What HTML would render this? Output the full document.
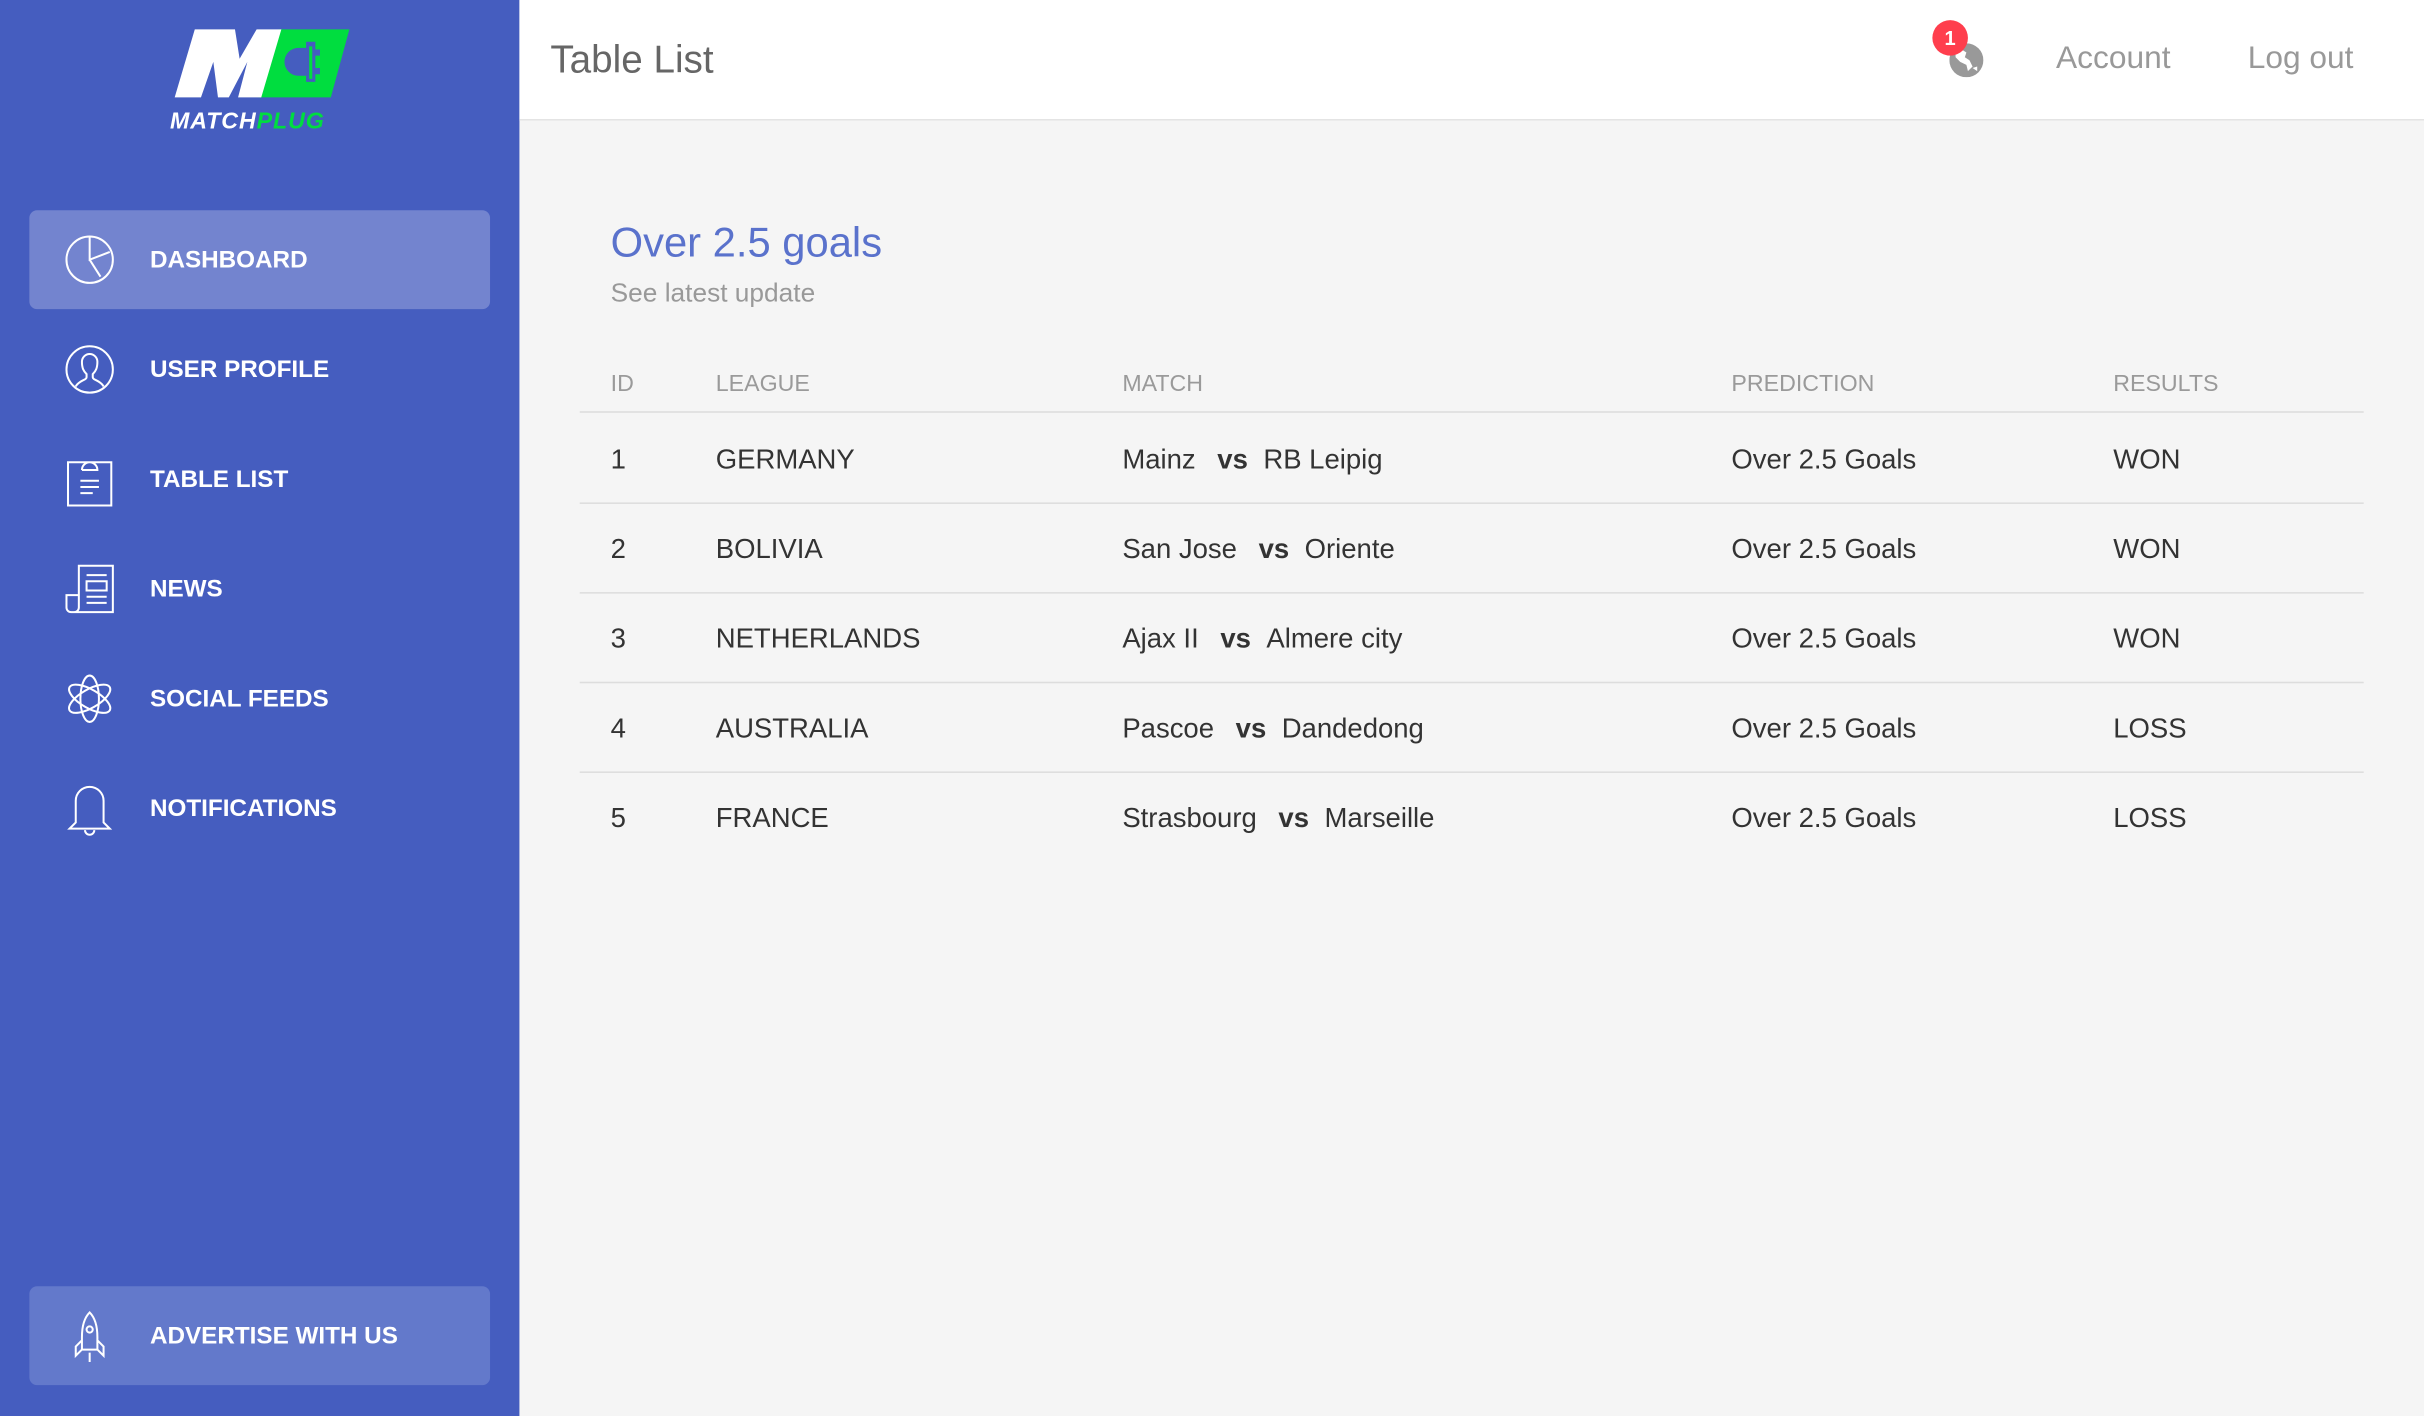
<!DOCTYPE html>
<html><head><meta charset="utf-8"><style>
*{margin:0;padding:0;box-sizing:border-box}
html,body{width:2424px;height:1416px;overflow:hidden;background:#f5f5f5;font-family:"Liberation Sans",Helvetica,Arial,sans-serif}
#w{width:1568px;height:916px;transform:scale(1.5459);transform-origin:0 0;position:relative}
.sb{position:absolute;left:0;top:0;width:336px;height:916px;background:#455dbf}
.it{position:absolute;left:19px;width:298px;height:64px;border-radius:5px;color:#fff;font-weight:bold;font-size:15.7px}
.it span{position:absolute;left:78px;top:24px}
.it svg{position:absolute;left:22px;top:15px}
.act{background:#7384cf}
.hd{position:absolute;left:336px;top:0;right:0;height:78px;background:#fff;border-bottom:1px solid #e3e3e3}
.t{position:absolute;font-size:17.8px;color:#333;white-space:nowrap}
.th{position:absolute;top:240px;font-size:15px;color:#9a9a9a}
.ln{position:absolute;left:375px;width:1154px;height:1px;background:#ddd}
b.vs{font-weight:bold;margin:0 10px 0 14px}
</style></head><body><div id="w">
<div class="sb">
<svg style="position:absolute;left:108px;top:18px" width="120" height="70" viewBox="0 0 120 70">
<polygon points="72,1 118,1 106,45 59,45" fill="#00dd3f"/>
<polygon points="18,1 44,1 47,20 58,1 74,1 61,45 46,45 52,22 40,45 33,45 30,22 22,45 5,45" fill="#fff"/>
<path d="M90,9h6v5h3v4h-3v8h3v4h-3v5h-6v-4h-5a9,9 0 0 1 0-18h5z" fill="#455dbf"/>
<path d="M92,12v21h2V12z" fill="#00dd3f"/>
<text x="2" y="65" font-family="Liberation Sans" font-weight="bold" font-style="italic" font-size="15" letter-spacing="0.6" fill="#fff">MATCH<tspan fill="#00dd3f">PLUG</tspan></text>
</svg>
<div class="it act" style="top:136px"><svg width="34" height="34" viewBox="0 0 34 34" fill="none" stroke="#fff" stroke-width="1.3"><circle cx="17" cy="17" r="15"/><path d="M17,2V17L30,12M17,17L24,28"/></svg><span>DASHBOARD</span></div>
<div class="it" style="top:207px"><svg width="34" height="34" viewBox="0 0 34 34" fill="none" stroke="#fff" stroke-width="1.3"><circle cx="17" cy="17" r="15"/><path d="M8,28c2-4 7-4 7-6v-2c-2-2-3-4-3-8a5,5 0 0 1 10,0c0,4-1,6-3,8v2c0,2 5,2 7,6"/></svg><span>USER PROFILE</span></div>
<div class="it" style="top:278px"><svg width="34" height="36" viewBox="0 0 34 36" fill="none" stroke="#fff" stroke-width="1.3"><path d="M3,6h28v28H3zM12,11h10a5,5 0 0 0-10,0M11,18h12M11,22h12M11,26h8"/></svg><span>TABLE LIST</span></div>
<div class="it" style="top:349px"><svg width="34" height="34" viewBox="0 0 34 34" fill="none" stroke="#fff" stroke-width="1.3"><path d="M10,2h22v30H5a3,3 0 0 1-3-3v-8h8zM10,21v8a3,3 0 0 1-3,3M15,8h13M15,12h13v6H15zM15,22h13M15,26h13"/></svg><span>NEWS</span></div>
<div class="it" style="top:420px"><svg width="34" height="34" viewBox="0 0 34 34" fill="none" stroke="#fff" stroke-width="1.3"><ellipse cx="17" cy="17" rx="6" ry="15"/><ellipse cx="17" cy="17" rx="6" ry="15" transform="rotate(60 17 17)"/><ellipse cx="17" cy="17" rx="6" ry="15" transform="rotate(-60 17 17)"/></svg><span>SOCIAL FEEDS</span></div>
<div class="it" style="top:491px"><svg width="34" height="36" viewBox="0 0 34 36" fill="none" stroke="#fff" stroke-width="1.3"><path d="M17,3a9,9 0 0 1 9,9v14l4,4H4l4-4V12a9,9 0 0 1 9-9zM14,31a3,3 0 0 0 6,0"/></svg><span>NOTIFICATIONS</span></div>
<div class="it act" style="top:832px;background:#6379cb"><svg width="34" height="36" viewBox="0 0 34 36" fill="none" stroke="#fff" stroke-width="1.3"><path d="M17,2c4,4 5,10 5,16v8h-10v-8c0-6 1-12 5-16zM12,20l-4,4v6l4-4M22,20l4,4v6l-4-4M17,28v6"/><circle cx="17" cy="13" r="2"/></svg><span>ADVERTISE WITH US</span></div>
</div>
<div class="hd">
<div style="position:absolute;left:20px;top:25px;font-size:25px;color:#666">Table List</div>
<svg style="position:absolute;left:925px;top:28px" width="22" height="22" viewBox="0 0 22 22"><circle cx="11" cy="11" r="11" fill="#999"/><path d="M4,6l4-2 3,2-1,3 3,2 2,4-3,3-1-4-4-2-3,-3z M15,16l3-1v3z" fill="#fff"/></svg>
<div style="position:absolute;left:914px;top:13px;width:23px;height:23px;border-radius:50%;background:#ff3e4d;color:#fff;font-size:13px;font-weight:bold;text-align:center;line-height:23px">1</div>
<div style="position:absolute;left:994px;top:26px;font-size:20.5px;color:#999">Account</div>
<div style="position:absolute;left:1118px;top:26px;font-size:20.5px;color:#999">Log out</div>
</div>
<div style="position:absolute;left:395px;top:142px;font-size:27px;color:#5a72cc">Over 2.5 goals</div>
<div style="position:absolute;left:395px;top:180px;font-size:17px;color:#999">See latest update</div>
<div class="th" style="left:395px">ID</div><div class="th" style="left:463px">LEAGUE</div><div class="th" style="left:726px">MATCH</div><div class="th" style="left:1120px">PREDICTION</div><div class="th" style="left:1367px">RESULTS</div>
<div class="ln" style="top:266px"></div><div class="ln" style="top:325px"></div><div class="ln" style="top:383px"></div><div class="ln" style="top:441px"></div><div class="ln" style="top:499px"></div>

<div class="t" style="left:395px;top:287px">1</div><div class="t" style="left:463px;top:287px">GERMANY</div><div class="t" style="left:726px;top:287px">Mainz<b class="vs">vs</b>RB Leipig</div><div class="t" style="left:1120px;top:287px">Over 2.5 Goals</div><div class="t" style="left:1367px;top:287px">WON</div>
<div class="t" style="left:395px;top:345px">2</div><div class="t" style="left:463px;top:345px">BOLIVIA</div><div class="t" style="left:726px;top:345px">San Jose<b class="vs">vs</b>Oriente</div><div class="t" style="left:1120px;top:345px">Over 2.5 Goals</div><div class="t" style="left:1367px;top:345px">WON</div>
<div class="t" style="left:395px;top:403px">3</div><div class="t" style="left:463px;top:403px">NETHERLANDS</div><div class="t" style="left:726px;top:403px">Ajax II<b class="vs">vs</b>Almere city</div><div class="t" style="left:1120px;top:403px">Over 2.5 Goals</div><div class="t" style="left:1367px;top:403px">WON</div>
<div class="t" style="left:395px;top:461px">4</div><div class="t" style="left:463px;top:461px">AUSTRALIA</div><div class="t" style="left:726px;top:461px">Pascoe<b class="vs">vs</b>Dandedong</div><div class="t" style="left:1120px;top:461px">Over 2.5 Goals</div><div class="t" style="left:1367px;top:461px">LOSS</div>
<div class="t" style="left:395px;top:519px">5</div><div class="t" style="left:463px;top:519px">FRANCE</div><div class="t" style="left:726px;top:519px">Strasbourg<b class="vs">vs</b>Marseille</div><div class="t" style="left:1120px;top:519px">Over 2.5 Goals</div><div class="t" style="left:1367px;top:519px">LOSS</div>
</div></body></html>
